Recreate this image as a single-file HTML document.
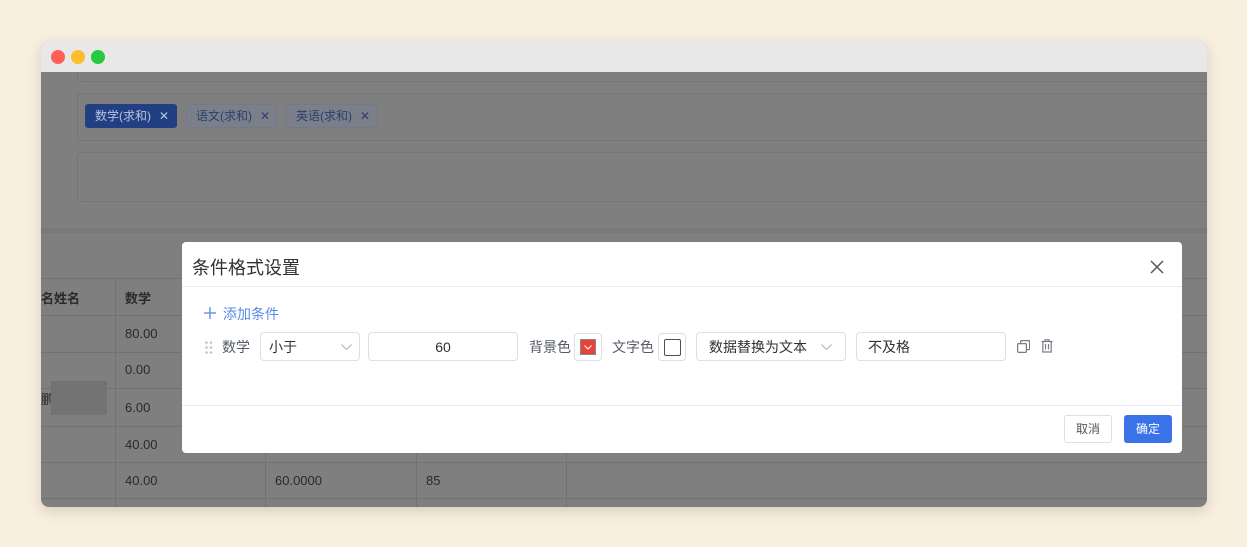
<!DOCTYPE html>
<html><head><meta charset="utf-8"><style>
*{box-sizing:border-box;margin:0;padding:0}
body{width:1247px;height:547px;background:#f9efdf;font-family:"Liberation Sans","Noto Sans CJK SC",sans-serif;position:relative;overflow:hidden;font-size:13px;color:#333}
.win{position:absolute;left:41px;top:41px;width:1166px;height:466px;border-radius:8px;overflow:hidden;background:#7f7f7f;box-shadow:0 4px 14px rgba(0,0,0,.15)}
.tb{height:31px;background:#e8e8e8;position:relative;z-index:2}
.dot{position:absolute;top:9px;width:14px;height:14px;border-radius:50%}
.a{position:absolute}
.box{position:absolute;border:1px solid #757575;border-radius:4px}
.tag{position:absolute;top:63px;height:24px;border-radius:3px;font-size:12px;line-height:22px;padding-left:9px;color:#2b3f6e;background:#7a7f8a;border:1px solid #737a89}
.cell{position:absolute;font-size:13px;color:#2a2a2a}
.hl{position:absolute;left:0;width:1166px;height:1px;background:#727272}
.vl{position:absolute;width:1px;background:#727272}
.modal{position:absolute;left:182px;top:242px;width:1000px;height:211px;background:#fff;border-radius:4px}
.inp{position:absolute;border:1px solid #dcdfe6;border-radius:4px;height:29px;top:90px;font-size:14px;line-height:29px;color:#303133}
.lbl{position:absolute;top:96px;font-size:14px;color:#555a66;line-height:18px}
</style></head><body>
<div class="win">
 <div class="tb">
  <div class="dot" style="left:10px;background:#fe5f57"></div>
  <div class="dot" style="left:30px;background:#febc2e"></div>
  <div class="dot" style="left:50px;background:#28c840"></div>
 </div>
 <div class="box" style="left:36px;top:20px;width:1200px;height:21px;border-top:none;border-radius:0 0 4px 4px"></div>
 <div class="box" style="left:36px;top:52px;width:1200px;height:48px"></div>
 <div class="tag" style="left:44px;background:#223f84;border-color:#223f84;color:#b8c3dc;width:92px">数学(求和)<span style="margin-left:8px">✕</span></div>
 <div class="tag" style="left:145px;width:91px">语文(求和)<span style="margin-left:8px">✕</span></div>
 <div class="tag" style="left:245px;width:91px">英语(求和)<span style="margin-left:8px">✕</span></div>
 <div class="box" style="left:36px;top:111px;width:1200px;height:50px"></div>
 <div class="a" style="left:0;top:187px;width:1166px;height:5px;background:#797979"></div>
 <div class="hl" style="top:237px"></div>
 <div class="hl" style="top:274px"></div>
 <div class="hl" style="top:311px"></div>
 <div class="hl" style="top:347px"></div>
 <div class="hl" style="top:385px"></div>
 <div class="hl" style="top:421px"></div>
 <div class="hl" style="top:457px"></div>
 <div class="vl" style="left:74px;top:237px;height:229px"></div>
 <div class="vl" style="left:224px;top:412px;height:54px"></div>
 <div class="vl" style="left:375px;top:412px;height:54px"></div>
 <div class="vl" style="left:525px;top:412px;height:54px"></div>
 <div class="cell" style="left:0;top:247px;font-weight:bold">名姓名</div>
 <div class="cell" style="left:84px;top:247px;font-weight:bold">数学</div>
 <div class="cell" style="left:84px;top:285px">80.00</div>
 <div class="cell" style="left:84px;top:321px">0.00</div>
 <div class="cell" style="left:0;top:348px">鹏</div>
 <div class="a" style="left:10px;top:340px;width:56px;height:34px;background:#737373"></div>
 <div class="cell" style="left:84px;top:359px">6.00</div>
 <div class="cell" style="left:84px;top:396px">40.00</div>
 <div class="cell" style="left:84px;top:432px">40.00</div>
 <div class="cell" style="left:234px;top:432px">60.0000</div>
 <div class="cell" style="left:385px;top:432px">85</div>
</div>
<div class="modal">
 <div class="a" style="left:10px;top:12px;font-size:18px;color:#303133">条件格式设置</div>
 <svg class="a" style="left:968px;top:18px" width="14" height="14"><path d="M1 1L13 13M13 1L1 13" stroke="#555" stroke-width="1.5"/></svg>
 <div class="a" style="left:0;top:44px;width:1000px;height:1px;background:#e8eaef"></div>
 <svg class="a" style="left:22px;top:65px" width="12" height="12"><path d="M6 0V12M0 6H12" stroke="#6d95e8" stroke-width="1.5"/></svg>
 <div class="a" style="left:41px;top:62px;font-size:14px;color:#5b8be6">添加条件</div>
 <svg class="a" style="left:23px;top:99px" width="8" height="13" fill="#c0c4cc"><circle cx="1.5" cy="1.5" r="1.3"/><circle cx="6" cy="1.5" r="1.3"/><circle cx="1.5" cy="6.5" r="1.3"/><circle cx="6" cy="6.5" r="1.3"/><circle cx="1.5" cy="11.5" r="1.3"/><circle cx="6" cy="11.5" r="1.3"/></svg>
 <div class="lbl" style="left:40px">数学</div>
 <div class="inp" style="left:78px;width:100px;padding-left:8px">小于<svg class="a" style="left:80px;top:11px" width="11" height="7"><path d="M0.5 0.5L5.5 5.5L10.5 0.5" stroke="#b0b3b9" fill="none"/></svg></div>
 <div class="inp" style="left:186px;width:150px;text-align:center">60</div>
 <div class="lbl" style="left:347px">背景色</div>
 <div class="inp" style="left:392px;width:28px;top:91px;height:28px"><div class="a" style="left:5px;top:5px;width:16px;height:16px;background:#e64339;border:1px solid #888"></div><svg class="a" style="left:9px;top:11px" width="8" height="5"><path d="M0.5 0.5L4 4L7.5 0.5" stroke="#fff" fill="none"/></svg></div>
 <div class="lbl" style="left:430px">文字色</div>
 <div class="inp" style="left:476px;width:28px;top:91px;height:28px"><div class="a" style="left:5px;top:5px;width:17px;height:17px;border:1px solid #4a4f5a;border-radius:2px"></div></div>
 <div class="inp" style="left:514px;width:150px;padding-left:12px">数据替换为文本<svg class="a" style="left:124px;top:11px" width="11" height="7"><path d="M0.5 0.5L5.5 5.5L10.5 0.5" stroke="#b0b3b9" fill="none"/></svg></div>
 <div class="inp" style="left:674px;width:150px;padding-left:11px">不及格</div>
 <svg class="a" style="left:835px;top:98px" width="13" height="13" fill="none" stroke="#777c86" stroke-width="1.2"><rect x="0.6" y="3.6" width="8.8" height="8.8" rx="1"/><path d="M3.6 3.6V1.6a1 1 0 0 1 1-1h7a1 1 0 0 1 1 1v7a1 1 0 0 1-1 1H9.4"/></svg>
 <svg class="a" style="left:859px;top:97px" width="12" height="14" fill="none" stroke="#777c86" stroke-width="1.2"><path d="M0.5 2.5H11.5M4 2.5V0.8H8V2.5M1.8 2.5V13H10.2V2.5M4.5 5V10.5M7.5 5V10.5"/></svg>
 <div class="a" style="left:0;top:163px;width:1000px;height:1px;background:#e8eaef"></div>
 <div class="a" style="left:882px;top:173px;width:48px;height:28px;border:1px solid #dcdfe6;border-radius:3px;font-size:12px;line-height:26px;text-align:center;color:#555">取消</div>
 <div class="a" style="left:942px;top:173px;width:48px;height:28px;background:#3a73e8;border-radius:3px;font-size:12px;line-height:28px;text-align:center;color:#fff">确定</div>
</div>
</body></html>
